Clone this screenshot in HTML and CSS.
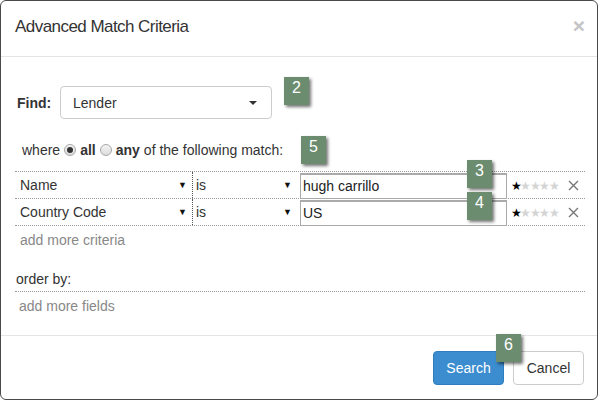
FILE: index.html
```html
<!DOCTYPE html>
<html>
<head>
<meta charset="utf-8">
<link rel="stylesheet" href="styles.css">
</head>
<body>
<div class="modal">
  <div class="modal-header">
    <h4 class="title">Advanced Match Criteria</h4>
    <span class="close">&times;</span>
  </div>
  <div class="modal-body">
    <div class="find-row">
      <label class="find-label">Find:</label>
      <div class="select">
        <span>Lender</span>
        <span class="caret"></span>
      </div>
      <div class="badge b2">2</div>
    </div>
    <div class="where-row">
      <span>where</span>
      <span class="radio checked"></span>
      <b>all</b>
      <span class="radio"></span>
      <b>any</b>
      <span>of the following match:</span>
      <div class="badge b5">5</div>
    </div>
    <div class="criteria">
      <div class="crow">
        <div class="cell field"><span>Name</span><span class="arrow">&#9660;</span></div>
        <div class="cell op"><span>is</span><span class="arrow">&#9660;</span></div>
        <div class="cell val"><div class="input">hugh carrillo</div></div>
        <div class="cell stars"><span class="on">&#9733;</span><span>&#9733;&#9733;&#9733;&#9733;</span></div>
        <div class="cell del"><svg width="11" height="11" viewBox="0 0 11 11"><path d="M1 1L10 10M10 1L1 10" stroke="#777" stroke-width="1.4" fill="none"/></svg></div>
        <div class="badge b3">3</div>
      </div>
      <div class="crow">
        <div class="cell field"><span>Country Code</span><span class="arrow">&#9660;</span></div>
        <div class="cell op"><span>is</span><span class="arrow">&#9660;</span></div>
        <div class="cell val"><div class="input">US</div></div>
        <div class="cell stars"><span class="on">&#9733;</span><span>&#9733;&#9733;&#9733;&#9733;</span></div>
        <div class="cell del"><svg width="11" height="11" viewBox="0 0 11 11"><path d="M1 1L10 10M10 1L1 10" stroke="#777" stroke-width="1.4" fill="none"/></svg></div>
        <div class="badge b4">4</div>
      </div>
    </div>
    <div class="add-link">add more criteria</div>
    <div class="order-by">order by:</div>
    <div class="add-link fields">add more fields</div>
  </div>
  <div class="modal-footer">
    <button class="btn primary">Search</button>
    <button class="btn default">Cancel</button>
    <div class="badge b6">6</div>
  </div>
</div>
</body>
</html>
```

FILE: styles.css
```css
* { box-sizing: border-box; }
html, body { margin: 0; padding: 0; background: #fff; }
body {
  font-family: "Liberation Sans", Arial, sans-serif;
  font-size: 14px;
  color: #333;
  width: 600px;
  height: 401px;
  overflow: hidden;
}
.modal {
  width: 598px;
  height: 400px;
  border: 1px solid #4a4a4a;
  border-radius: 6px;
  background: #fff;
  display: flex;
  flex-direction: column;
  position: relative;
}
.modal-header {
  height: 56px;
  padding: 0 15px 0 14px;
  border-bottom: 1px solid #e5e5e5;
  display: flex;
  align-items: center;
  justify-content: space-between;
}
.title {
  margin: 0;
  font-size: 17px;
  letter-spacing: -0.55px;
  font-weight: normal;
  color: #333;
  padding-bottom: 4px;
}
.close {
  font-size: 21px;
  font-weight: bold;
  color: #c4c4c4;
  line-height: 1;
  padding-bottom: 6px;
  margin-right: -3px;
}
.modal-body {
  flex: 1;
  padding: 0 13px 0 14px;
  position: relative;
}
.find-row {
  display: flex;
  align-items: center;
  margin-top: 29px;
  position: relative;
}
.find-label {
  font-weight: bold;
  margin-left: 2px;
  width: 43px;
}
.select {
  width: 212px;
  height: 33px;
  border: 1px solid #ccc;
  border-radius: 4px;
  display: flex;
  align-items: center;
  justify-content: space-between;
  padding: 0 14px 0 12px;
  color: #333;
}
.caret {
  width: 0; height: 0;
  border-left: 4px solid transparent;
  border-right: 4px solid transparent;
  border-top: 4px solid #333;
}
.badge {
  position: absolute;
  width: 25px;
  height: 28px;
  background: #6b8c6f;
  color: #fff;
  font-size: 16px;
  text-align: center;
  line-height: 22px;
  box-shadow: 2px 2px 3px rgba(0,0,0,0.55);
}
.b2 { left: 269px; top: -9px; }
.where-row {
  display: flex;
  align-items: center;
  gap: 4px;
  margin-top: 18px;
  margin-left: 7px;
  height: 26px;
  position: relative;
}
.where-row b { color: #333; }
.radio {
  width: 12px; height: 12px;
  border-radius: 50%;
  border: 1px solid #a8a8a8;
  background: linear-gradient(#f4f4f4, #dcdcdc);
  display: inline-block;
  position: relative;
}
.radio.checked::after {
  content: "";
  position: absolute;
  left: 2px; top: 2px;
  width: 6px; height: 6px;
  border-radius: 50%;
  background: #333;
}
.b5 { left: 279px; top: -1px; }
.criteria {
  margin-top: 8px;
  border-top: 1px dotted #999;
  width: 570px;
}
.crow {
  display: flex;
  height: 27px;
  border-bottom: 1px dotted #999;
  position: relative;
  align-items: stretch;
}
.cell { display: flex; align-items: center; }
.field {
  width: 178px;
  padding: 0 5px 0 5px;
  justify-content: space-between;
  border-right: 1px dotted #555;
}
.op {
  width: 104px;
  padding: 0 5px 0 3px;
  justify-content: space-between;
}
.arrow { font-size: 9px; color: #111; }
.val { width: 210px; padding-left: 3px; }
.input {
  width: 209px;
  height: 26px;
  border: 1px solid #aaa;
  border-top-width: 2px;
  padding: 0 0 0 2px;
  display: flex;
  align-items: center;
  color: #222;
  margin-top: 1px;
}
.stars {
  width: 56px;
  padding-left: 4px;
  padding-top: 2px;
  font-size: 12px;
  letter-spacing: -1.6px;
  color: #d4d4d4;
}
.stars .on { color: #000; }
.del {
  padding-left: 5px;
}
.b3 { left: 452px; top: -12px; }
.b4 { left: 452px; top: -7px; }
.add-link {
  color: #888;
  margin-left: 5px;
  margin-top: 6px;
  height: 16px;
}
.order-by {
  margin-top: 23px;
  width: 570px;
  border-bottom: 1px dotted #999;
  padding-left: 1px;
  height: 21px;
}
.add-link.fields {
  margin-left: 4px;
  margin-top: 6px;
}
.modal-footer {
  height: 64px;
  border-top: 1px solid #e5e5e5;
  display: flex;
  justify-content: flex-end;
  align-items: flex-start;
  padding: 15px 13px 0 0;
  gap: 9px;
  position: relative;
}
.btn {
  height: 34px;
  width: 71px;
  border-radius: 4px;
  font-family: "Liberation Sans", Arial, sans-serif;
  font-size: 14px;
  border: 1px solid;
  padding: 0;
}
.primary {
  background: #3c8dd0;
  border-color: #2e7dc0;
  color: #fff;
}
.default {
  background: #fff;
  border-color: #ccc;
  color: #333;
}
.b6 { left: 495px; top: -2px; }
```
